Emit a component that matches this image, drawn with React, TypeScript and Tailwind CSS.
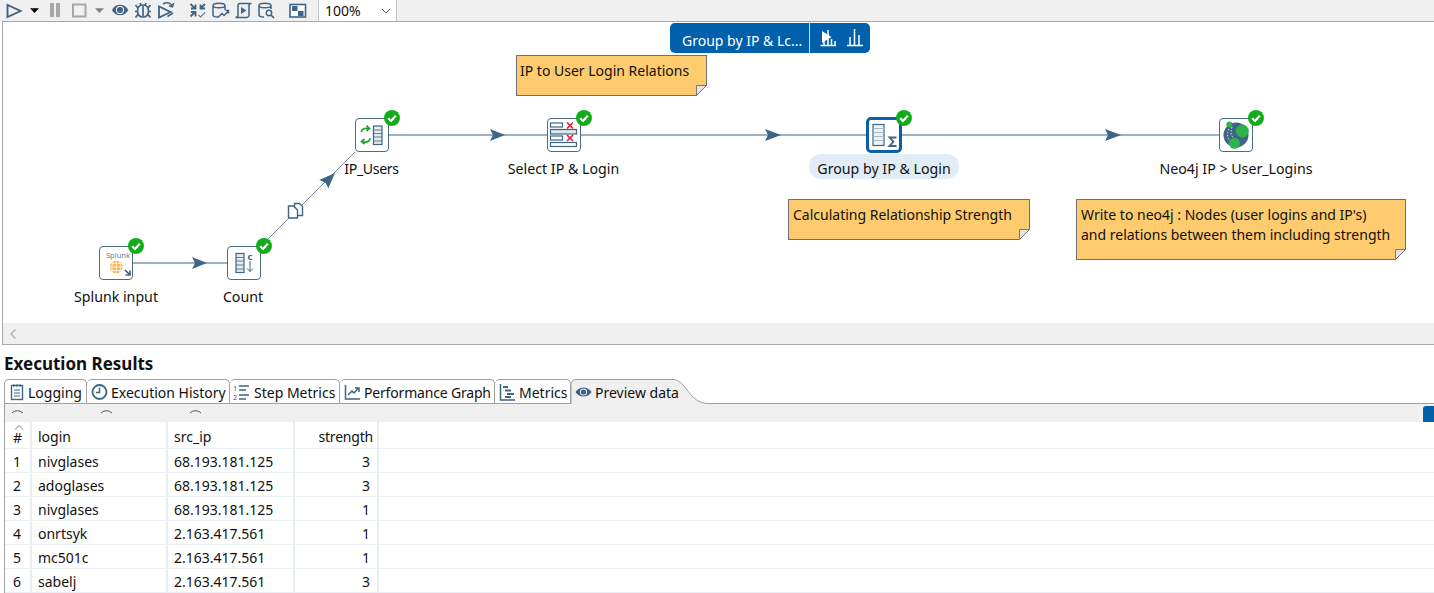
import React from "react";

const S = "#3f6484";

function Badge({ cls }: { cls: string }) {
  return (
    <svg className={`absolute w-4 h-4 ${cls}`} viewBox="0 0 16 16">
      <circle cx="8" cy="8" r="8" fill="#12ab1c" />
      <path d="M4.2 8.2 L7 11 L11.8 5.8" fill="none" stroke="#fff" strokeWidth="2.2" />
    </svg>
  );
}

function Note({ cls, children }: { cls: string; children: React.ReactNode }) {
  return (
    <div className={`absolute bg-[#ffcb6f] border border-[#6f6f6f] text-[14px] leading-[20px] pt-[5px] text-[#111] whitespace-nowrap ${cls}`}>
      {children}
      <svg className="absolute right-[-1px] bottom-[-1px] w-[11px] h-[11px]" viewBox="0 0 11 11">
        <path d="M0 11 L11 0 L11 11 Z" fill="#fff" />
        <path d="M0.5 10.5 L0.5 0.5 L10.5 0.5 Z" fill="#e4e4e4" stroke="#777" strokeWidth="1" />
      </svg>
    </div>
  );
}

function Box({ cls, children, selected }: { cls: string; children: React.ReactNode; selected?: boolean }) {
  return (
    <div className={`absolute bg-white flex items-center justify-center ${selected ? "w-[36px] h-[36px] border-[3px] border-[#0b5ea8] rounded-[5px]" : "w-[34px] h-[34px] border border-[#4a6b88] rounded-[4px]"} ${cls}`}>
      {children}
    </div>
  );
}

function Label({ cls, children }: { cls: string; children: React.ReactNode }) {
  return <div className={`absolute text-[14.2px] leading-[20px] text-[#111] whitespace-nowrap -translate-x-1/2 ${cls}`}>{children}</div>;
}

function Toolbar() {
  return (
    <div className="h-[21px] flex items-center bg-[#f0f0f0] shrink-0">
      <svg width="317" height="21" viewBox="0 0 317 21" className="shrink-0 mr-[1px]">
        <path d="M7.5 5 L7.5 17 L20.5 11 Z" fill="none" stroke={S} strokeWidth="1.9" />
        <path d="M30 8.3 L39 8.3 L34.5 13 Z" fill="#000" />
        <path d="M50 3h4v14h-4z M56 3h4v14h-4z" fill="#a8a8a8" />
        <rect x="73" y="4.5" width="12.5" height="12" fill="none" stroke="#a8a8a8" strokeWidth="2" />
        <path d="M95 8.3 L104 8.3 L99.5 13 Z" fill="#808080" />
        <path d="M112 10 C115 3 125 3 128.3 10 C125 17 115 17 112 10 Z" fill={S} />
        <circle cx="120" cy="10" r="4.2" fill="#e9eef2" />
        <circle cx="120" cy="10" r="3" fill={S} />
        <path d="M143 5 C147 5 148.5 8 148.5 11 C148.5 15 146 17 143 17 C140 17 137.5 15 137.5 11 C137.5 8 139 5 143 5 Z" fill="none" stroke={S} strokeWidth="1.7" />
        <path d="M138 8 L135.5 5 M148 8 L150.5 5 M138 11.5 L135 11.5 M148 11.5 L151 11.5 M138 14.5 L135.5 17.5 M148 14.5 L150.5 17.5 M140 3 L141 5.5 M146 3 L145 5.5 M143 6 V16" fill="none" stroke={S} strokeWidth="1.7" />
        <path d="M159 6.5 L159 17.5 L170.5 12 Z" fill="none" stroke={S} strokeWidth="1.8" />
        <path d="M163 4 C167 1.5 171 3 172.5 6.5 M173.5 3 L172.5 6.8 L169 5.8 M173 13 L167.5 16.5" fill="none" stroke={S} strokeWidth="1.5" />
        <path d="M190.5 4 L195 8.5 M195.5 4.5 L195.5 8.5 L191 8.5 M205 4 L200.5 8.5 M200.5 4.5 L200.5 8.5 L205 8.5 M190.5 16.5 L195 12 M195.5 16.5 L195.5 12 L191 12" fill="none" stroke={S} strokeWidth="1.8" />
        <path d="M198.5 15 L200.5 17 L205 12.5" fill="none" stroke="#777" strokeWidth="1.1" />
        <path d="M213 5.5 C213 2.5 225 2.5 225 5.5 L225 10 M213 5.5 L213 15 C213 16.5 216 17 218 17 M213 5.5 C213 8.5 225 8.5 225 5.5" fill="none" stroke={S} strokeWidth="1.5" />
        <path d="M218 17.5 L222 13.5 L224 15.5 L228.5 11 M225.5 10.5 L228.5 10.5 L228.5 13.5" fill="none" stroke={S} strokeWidth="1.5" />
        <path d="M238 5.5 C238 3.5 240 3.5 240 3.5 L251.5 3.5 C249.5 3.5 249 5 249 5.5 L249 15 C249 17 247 17.5 247 17.5 L235.5 17.5 C237.5 17.5 238 16 238 15 Z" fill="none" stroke={S} strokeWidth="1.5" />
        <path d="M241 7 L246.5 10.5 L241 14 Z" fill={S} />
        <path d="M259 5.5 C259 2.5 271 2.5 271 5.5 L271 9 M259 5.5 L259 15 C259 16.5 262 17 264 17 M259 5.5 C259 8.5 271 8.5 271 5.5" fill="none" stroke={S} strokeWidth="1.5" />
        <circle cx="269" cy="13" r="2.7" fill="none" stroke={S} strokeWidth="1.4" />
        <path d="M271 15 L274 18" stroke={S} strokeWidth="1.7" />
        <rect x="290" y="4.5" width="15.5" height="12.5" fill="#fff" stroke={S} strokeWidth="1.6" />
        <rect x="292" y="6" width="5.5" height="5" fill={S} />
        <rect x="298" y="11" width="5.5" height="5" fill={S} />
      </svg>
      <div className="h-[21px] w-[79px] bg-white border-x border-[#c4c4c4] flex items-center justify-between pl-[6px] pr-[5px] text-[14px] text-[#111]">
        <span>100%</span>
        <svg width="10" height="6" viewBox="0 0 10 6"><path d="M1 1 L5 5 L9 1" fill="none" stroke="#555" /></svg>
      </div>
    </div>
  );
}

function Canvas() {
  return (
    <div className="relative ml-[2px] h-[324px] shrink-0 border-l border-t border-b border-[#a8a8a8] bg-white overflow-hidden">
      <div className="absolute left-[-3px] top-[-22px] w-[1434px] h-[346px]">
        <svg className="absolute left-0 top-0" width="1434" height="346" viewBox="0 0 1434 346">
          <g stroke="#3f6484" strokeWidth="1.2" fill="none">
            <path d="M133 263 L227 263" />
            <path d="M261 246 L355 152" stroke="#6c879e" strokeWidth="1" />
            <path d="M389 135 L547 135" />
            <path d="M581 135 L866 135" />
            <path d="M902 135 L1219 135" />
          </g>
          <g fill="#3f6484">
            <path d="M192 257 L207 263 L192 269 L195 263 Z" />
            <path d="M490 129 L505 135 L490 141 L493 135 Z" />
            <path d="M765 129 L781 135 L765 141 L768 135 Z" />
            <path d="M1105 129 L1121 135 L1105 141 L1108 135 Z" />
            <path d="M319.3 180 L335 173 L328.3 188.3 L325.5 182.8 Z" />
          </g>
          <g fill="#fff" stroke="#3f6484" strokeWidth="1.4">
            <path d="M294.5 203.5 L299.5 203.5 L302.5 206.5 L302.5 215.5 L294.5 215.5 Z" />
            <path d="M288.5 206 L293.5 206 L297.5 210 L297.5 218 L288.5 218 Z" />
          </g>
        </svg>

        <div className="absolute left-[670px] top-[23px] w-[200px] h-[30px] bg-[#0060ab] rounded-[5px] flex text-white text-[14px]">
          <div className="w-[140px] h-[30px] border-r border-[#cfe0ee] pl-[12px] pt-[8px] leading-[20px] whitespace-nowrap shrink-0">Group by IP &amp; Lc...</div>
          <svg width="60" height="30" viewBox="-1 0 60 30">
            <path d="M11 8 L11 20 L20.5 14 Z" fill="#fff" />
            <path d="M9.5 22.5 L25 22.5 M13 22.5 L13 18 M17 22.5 L17 7 M20.5 22.5 L20.5 16 M24 22.5 L24 18" stroke="#fff" strokeWidth="1.5" />
            <path d="M36 22.5 L52 22.5 M39 22.5 L39 14 M43.5 22.5 L43.5 6 M48 22.5 L48 12" stroke="#fff" strokeWidth="1.5" />
          </svg>
        </div>

        <Note cls="left-[516px] top-[55px] w-[191px] h-[41px] pl-[3px]">IP to User Login Relations</Note>
        <Note cls="left-[788px] top-[199px] w-[242px] h-[41px] pl-[4px]">Calculating Relationship Strength</Note>
        <Note cls="left-[1076px] top-[199px] w-[330px] h-[61px] pl-[4px]">
          Write to neo4j : Nodes (user logins and IP's)
          <br />
          and relations between them including strength
        </Note>

        <Box cls="left-[99px] top-[246px]">
          <svg width="32" height="32" viewBox="0 0 32 32">
            <text x="6" y="11" fontSize="7.5" fill="#6b8297" fontFamily="Noto Sans, sans-serif">Splunk</text>
            <circle cx="16.3" cy="20" r="6.3" fill="#ffb54d" />
            <path d="M10 20 H22.6 M16.3 13.7 V26.3 M11.5 16.5 H21 M11.5 23.5 H21 M13.3 15 C11.3 19 11.3 22 13.3 25 M19.3 15 C21.3 19 21.3 22 19.3 25" stroke="#fff" strokeWidth="0.7" fill="none" />
            <path d="M25 23 L30 28 M25.5 28 L30 28 L30 23.5" stroke="#3f6484" strokeWidth="1.7" fill="none" />
          </svg>
        </Box>
        <Box cls="left-[227px] top-[246px]">
          <svg width="32" height="32" viewBox="0 0 32 32">
            <rect x="8" y="6.5" width="8" height="19" fill="#e4eaf0" stroke="#3f6484" strokeWidth="1.2" />
            <path d="M8 10.5 H16 M8 14 H16 M8 18 H16 M8 22 H16" stroke="#3f6484" strokeWidth="0.8" />
            <text x="19.5" y="12.5" fontSize="9.5" fontWeight="700" fill="#3f6484" fontFamily="Noto Sans, sans-serif">c</text>
            <path d="M22 14 V24.5 M19 21.5 L22 24.5 L25 21.5" stroke="#3f6484" fill="none" />
          </svg>
        </Box>
        <Box cls="left-[355px] top-[118px]">
          <svg width="32" height="32" viewBox="0 0 32 32">
            <rect x="17.5" y="7" width="8.5" height="18.5" fill="#e4eaf0" stroke="#3f6484" strokeWidth="1.2" />
            <path d="M18 11 H26 M18 14.5 H26 M18 18 H26 M18 22 H26" stroke="#3f6484" strokeWidth="0.8" />
            <path d="M5.5 13 C5.5 9.5 9 9 12.5 9.5 M10.5 6.5 L13.5 9.5 L10.5 12 M14 19 C14 23.5 9 23.5 6 22.5 M8.5 20 L5.5 22.5 L8.5 25" fill="none" stroke="#1aa82a" strokeWidth="1.7" />
          </svg>
        </Box>
        <Box cls="left-[547px] top-[118px]">
          <svg width="32" height="32" viewBox="0 0 32 32">
            <rect x="2.5" y="4" width="12" height="4" fill="#fff" stroke="#3f6484" strokeWidth="1.2" />
            <rect x="2.5" y="10.5" width="26" height="4.5" fill="#dfe6ee" stroke="#3f6484" strokeWidth="1.2" />
            <rect x="2.5" y="17" width="12" height="4" fill="#fff" stroke="#3f6484" strokeWidth="1.2" />
            <rect x="2.5" y="23.5" width="26" height="4" fill="#fff" stroke="#3f6484" strokeWidth="1.2" />
            <path d="M19 3.5 L25 9.5 M25 3.5 L19 9.5 M19 16 L25 22 M25 16 L19 22" stroke="#e5203a" strokeWidth="1.7" />
          </svg>
        </Box>
        <Box selected cls="left-[866px] top-[117px]">
          <svg width="30" height="30" viewBox="0 0 30 30">
            <rect x="4" y="4.5" width="11" height="21" fill="#eef2f6" stroke="#3f6484" strokeWidth="1.2" />
            <path d="M4 8.5 H15 M4 12.5 H15 M4 16.5 H15 M4 20.5 H15" stroke="#a9bac9" />
            <path d="M27.5 17.5 H20.5 L24.5 21.8 L20.5 26 H27.5" stroke="#3f6484" strokeWidth="1.8" fill="none" />
          </svg>
        </Box>
        <Box cls="left-[1219px] top-[118px]">
          <svg width="32" height="32" viewBox="0 0 32 32">
            <circle cx="16" cy="16" r="12.5" fill="#3f6484" />
            <path d="M9 10 C6 16 8 22 13 24 M12 8 C10 14 11 19 17 21" stroke="#fff" strokeWidth="0.8" strokeDasharray="1.5 1.5" fill="none" />
            <circle cx="9.3" cy="5.5" r="3" fill="#2eb34a" />
            <circle cx="22.3" cy="12" r="6.5" fill="#2eb34a" />
            <circle cx="14.5" cy="24.3" r="5.5" fill="#2eb34a" />
          </svg>
        </Box>

        <Badge cls="left-[128px] top-[238px]" />
        <Badge cls="left-[256px] top-[238px]" />
        <Badge cls="left-[384px] top-[110px]" />
        <Badge cls="left-[576px] top-[110px]" />
        <Badge cls="left-[896px] top-[110px]" />
        <Badge cls="left-[1248px] top-[110px]" />

        <Label cls="left-[116px] top-[287px]">Splunk input</Label>
        <Label cls="left-[243px] top-[287px]">Count</Label>
        <Label cls="left-[371.5px] top-[159px] tracking-[-0.4px]">IP_Users</Label>
        <Label cls="left-[563.5px] top-[159px]">Select IP &amp; Login</Label>
        <div className="absolute left-[809px] top-[154px] w-[150px] h-[25px] rounded-[12px] bg-[#e1ecf6]" />
        <Label cls="left-[884px] top-[159px]">Group by IP &amp; Login</Label>
        <Label cls="left-[1236px] top-[159px]">Neo4j IP &gt; User_Logins</Label>
      </div>
      <div className="absolute left-0 right-0 bottom-0 h-[21px] bg-[#f0f0f0] flex items-center pl-[6px]">
        <svg width="8" height="12" viewBox="0 0 8 12"><path d="M6.5 1.5 L2 6 L6.5 10.5" fill="none" stroke="#b5b5b5" strokeWidth="1.5" /></svg>
      </div>
    </div>
  );
}

const tabIcon: Record<string, React.ReactNode> = {
  Logging: (
    <svg width="17" height="18" viewBox="-1 0 17 18"><rect x="2.5" y="2.5" width="11" height="14" fill="none" stroke={S} strokeWidth="1.4" /><path d="M5 1 V4 M8 1 V4 M11 1 V4 M5 7 H11 M5 10 H11 M5 13 H11" stroke={S} /></svg>
  ),
  "Execution History": (
    <svg width="17" height="18" viewBox="0 0 17 18"><circle cx="8.5" cy="9" r="7" fill="none" stroke={S} strokeWidth="1.8" /><path d="M8.5 4.5 V9.5 H5" fill="none" stroke={S} strokeWidth="1.5" /></svg>
  ),
  "Step Metrics": (
    <svg width="18" height="18" viewBox="0 0 18 18"><text x="0" y="8" fontSize="7.5" fill={S} fontFamily="Noto Sans, sans-serif">1</text><text x="0" y="17" fontSize="7.5" fill={S} fontFamily="Noto Sans, sans-serif">2</text><path d="M6 3 H16 M6 7 H13 M6 12 H16 M6 16 H13" stroke={S} strokeWidth="1.3" /></svg>
  ),
  "Performance Graph": (
    <svg width="17" height="18" viewBox="0 0 17 18"><path d="M1.5 2 V16 H16" fill="none" stroke={S} strokeWidth="1.5" /><path d="M4 12 L8 8 L10 10 L14 5.5 M11 5 H15 V9" fill="none" stroke={S} strokeWidth="1.5" /></svg>
  ),
  Metrics: (
    <svg width="17" height="18" viewBox="0 0 17 18"><path d="M1.5 1 V17 H16" fill="none" stroke={S} strokeWidth="1.5" /><path d="M4 4 H9 M6 7.5 H12 M8 11 H15 M6 14 H12" stroke={S} strokeWidth="1.8" /></svg>
  ),
  "Preview data": (
    <svg width="17" height="12" viewBox="0 0 17 12"><path d="M0.5 6 C4 0 13 0 16.5 6 C13 12 4 12 0.5 6 Z" fill={S} /><circle cx="8.5" cy="6" r="3.6" fill="#e9eef2" /><circle cx="8.5" cy="6" r="2.6" fill={S} /></svg>
  ),
};

const tabs = [
  { name: "Logging", cls: "w-[83px] pl-[3px]", text: "" },
  { name: "Execution History", cls: "w-[143px] pl-[4px]", text: "" },
  { name: "Step Metrics", cls: "w-[110px] pl-[3px]", text: "" },
  { name: "Performance Graph", cls: "w-[155px] pl-[4px]", text: "tracking-[-0.18px]" },
  { name: "Metrics", cls: "w-[76px] pl-[4px]", text: "" },
];

function Tabs() {
  return (
    <div className="relative h-[25px] ml-[4px] mt-[7px] flex shrink-0 border-b border-[#a0a0a0] text-[14px] text-[#111]">
      {tabs.map((t) => (
        <div key={t.name} className={`h-[24px] ${t.cls} flex items-center gap-[3px] border-t border-r border-[#a0a0a0] first:border-l rounded-t-[5px] bg-white shrink-0 whitespace-nowrap`}>
          {tabIcon[t.name]}
          <span className={`relative top-[1px] ${t.text}`}>{t.name}</span>
        </div>
      ))}
      <div className="relative h-[25px] w-[137px] flex items-center gap-[3px] pl-[4px] shrink-0 whitespace-nowrap z-10">
        <svg className="absolute left-0 top-0" width="137" height="25" viewBox="0 0 137 25">
          <path d="M0 25 L0 5 C0 2 2 0 5 0 L102 0 C115 0 118 24 137 24 L137 25 Z" fill="#f0f0f0" stroke="none" />
          <path d="M0 24 L0 5 C0 2 2 0 5 0 L102 0 C115 0 118 24 137 24" transform="translate(0 0.5)" fill="none" stroke="#a0a0a0" />
        </svg>
        <span className="relative">{tabIcon["Preview data"]}</span>
        <span className="relative top-[1px]">Preview data</span>
      </div>
    </div>
  );
}

const rows = [
  ["1", "nivglases", "68.193.181.125", "3"],
  ["2", "adoglases", "68.193.181.125", "3"],
  ["3", "nivglases", "68.193.181.125", "1"],
  ["4", "onrtsyk", "2.163.417.561", "1"],
  ["5", "mc501c", "2.163.417.561", "1"],
  ["6", "sabelj", "2.163.417.561", "3"],
];

function Table() {
  return (
    <div className="ml-[4px] border-l border-[#a0a0a0] bg-white">
      <div className="relative h-[18px] bg-[#f0f0f0] flex items-start justify-end">
        <svg className="absolute left-0 top-[6px]" width="200" height="4" viewBox="0 0 200 4">
          <path d="M7 3 C10 0 15 0 18 3 M96 3 C99 0 104 0 107 3 M185 3 C188 0 193 0 196 3" fill="none" stroke="#555" />
        </svg>
        <div className="w-[11px] h-[16px] mt-[2px] bg-[#0060ab] rounded-tl-[3px]" />
      </div>
      <div className="text-[14px] text-[#111]">
        <div className="relative flex h-[27px] border-b border-[#eaeff5]">
          <svg className="absolute left-[9px] top-[3px]" width="10" height="5" viewBox="0 0 10 5"><path d="M1 4.5 L5 0.5 L9 4.5" fill="none" stroke="#777" /></svg>
          <div className="w-[27px] border-r-2 border-[#e8eef6] text-center pt-[6px] leading-[20px]">#</div>
          <div className="w-[136px] border-r-2 border-[#e8eef6] pl-[6px] pt-[5px] leading-[20px]">login</div>
          <div className="w-[127px] border-r-2 border-[#e8eef6] pl-[6px] pt-[5px] leading-[20px]">src_ip</div>
          <div className="w-[84px] border-r-2 border-[#e8eef6] pr-[4px] text-right pt-[5px] leading-[20px] tracking-[-0.2px]">strength</div>
        </div>
        {rows.map((r) => (
          <div key={r[0]} className="flex h-[24px] border-b border-[#eaeff5] leading-[25px]">
            <div className="w-[27px] border-r-2 border-[#e8eef6] pl-[8px]">{r[0]}</div>
            <div className="w-[136px] border-r-2 border-[#e8eef6] pl-[6px]">{r[1]}</div>
            <div className="w-[127px] border-r-2 border-[#e8eef6] pl-[6px]">{r[2]}</div>
            <div className="w-[84px] border-r-2 border-[#e8eef6] pr-[7px] text-right">{r[3]}</div>
          </div>
        ))}
      </div>
    </div>
  );
}

export default function App() {
  return (
    <div className="w-[1434px] h-[593px] overflow-hidden bg-white flex flex-col font-['Noto_Sans',sans-serif]">
      <Toolbar />
      <Canvas />
      <div className="pl-[4px] pt-[9px] h-[27px] text-[17px] leading-[20px] font-bold text-[#111] shrink-0">Execution Results</div>
      <Tabs />
      <Table />
    </div>
  );
}
